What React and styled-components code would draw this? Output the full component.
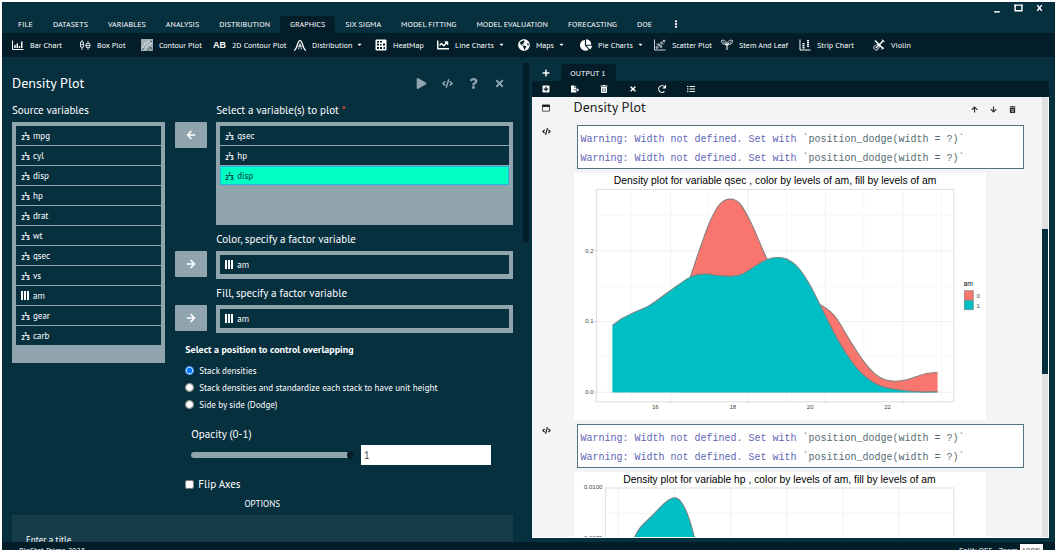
import React, {useState} from 'react';
import styled, {createGlobalStyle, css} from 'styled-components';
import {
	FaArrowDown,
	FaArrowLeft,
	FaArrowRight,
	FaArrowUp,
	FaCaretDown,
	FaChartLine,
	FaChartPie,
	FaCode,
	FaEllipsisV,
	FaFileExport,
	FaGlobeAmericas,
	FaListUl,
	FaPlay,
	FaPlus,
	FaPlusSquare,
	FaQuestion,
	FaRedo,
	FaRegWindowMaximize,
	FaTimes,
	FaTrashAlt,
} from 'react-icons/fa';

const menus = ['FILE', 'DATASETS', 'VARIABLES', 'ANALYSIS', 'DISTRIBUTION', 'GRAPHICS', 'SIX SIGMA', 'MODEL FITTING', 'MODEL EVALUATION', 'FORECASTING', 'DOE'];

const BarIcon = () => (
	<svg viewBox='0 0 24 24' fill='none' stroke='currentColor'>
		<path d='M1 3v18h22' strokeWidth='2' />
		<path d='M6 18v-6M10.500 18V9M15 18v-4M19.500 18V5' strokeWidth='3' />
	</svg>
);
const BoxIcon = () => (
	<svg viewBox='0 0 24 24' fill='none' stroke='currentColor' strokeWidth='1.600'>
		<path d='M6 2v4M6 16v6M3 6h6v10H3zM3 11h6M18 4v5M18 17v5M14.500 9h7v8h-7zM12 13h11' />
	</svg>
);
const ContourIcon = () => (
	<svg viewBox='0 0 24 24'>
		<rect x='0' y='0' width='24' height='24' fill='#a3b0b5' />
		<path d='M2 18c5-2 3-9 8-10s4-5 9-5M7 22c1-7 5-5 7-9s4-3 8-4' fill='none' stroke='#dfe5e7' strokeWidth='2' />
		<path d='M13 23l6-7 4 6M18 3l4 3M3 21l4-3' fill='none' stroke='#3c5059' strokeWidth='2' />
	</svg>
);
const BellIcon = () => (
	<svg viewBox='0 0 24 24' fill='none' stroke='currentColor' strokeWidth='2.500'>
		<path d='M0 22c7 0 6-19 12-19s5 19 12 19' />
		<path d='M9 21l3-12 3 12M7 14h10' strokeWidth='1.500' />
	</svg>
);
const HeatIcon = () => (
	<svg viewBox='0 0 24 24'>
		<rect x='1' y='1' width='22' height='22' rx='2' fill='currentColor' />
		<path d='M4 4h4v3H4zM10 4h4v3h-4zM4 9h4v4H4zM16 9h4v4h-4zM10 10h3v3h-3zM4 16h4v4H4zM10 16h4v4h-4zM17 16h3v4h-3z' fill='#031d29' />
	</svg>
);
const ScatterIcon = () => (
	<svg viewBox='0 0 24 24' fill='none' stroke='currentColor' strokeWidth='1.600'>
		<path d='M1 1v21h22' />
		<circle cx='6' cy='17' r='1.800' />
		<circle cx='10' cy='12' r='1.800' />
		<circle cx='14' cy='15' r='1.800' />
		<circle cx='15' cy='8' r='1.800' />
		<circle cx='20' cy='4' r='1.800' />
		<path d='M5 12l3-3M18 11l2-2' />
	</svg>
);
const LeafIcon = () => (
	<svg viewBox='0 0 24 24' fill='none' stroke='currentColor' strokeWidth='1.600'>
		<path d='M12 22v-8c0-3 2-4 4-6M12 14c0-3-2-4-5-6' strokeWidth='2' />
		<path d='M1 3c6-2 10 1 10 8C5 12 1 9 1 3zM23 3c-6-2-10 1-10 8 6 1 10-2 10-8z' />
		<path d='M4 5l4 4M20 5l-4 4' />
	</svg>
);
const StripIcon = () => (
	<svg viewBox='0 0 24 24' fill='none' stroke='currentColor'>
		<path d='M2 1v21h21' strokeWidth='2' />
		<path d='M9 8v11M18 2v14' strokeWidth='4' strokeDasharray='3 1' />
	</svg>
);
const ViolinIcon = () => (
	<svg viewBox='0 0 24 24' fill='none' stroke='currentColor' strokeWidth='2'>
		<path d='M2 15c2-3 4-1 5-3s3-2 5 0 2 4 0 5-1 4-4 5-8-3-6-7z' />
		<path d='M6 18L21 3M4 3l17 17' strokeWidth='3' />
		<path d='M18 1l5 5M17 21l4-4' />
	</svg>
);
const AbIcon = () => <AbText>AB</AbText>;

const tools = [
	{label: 'Bar Chart', Icon: BarIcon, width: 67},
	{label: 'Box Plot', Icon: BoxIcon, width: 62},
	{label: 'Contour Plot', Icon: ContourIcon, width: 72},
	{label: '2D Contour Plot', Icon: AbIcon, width: 81},
	{label: 'Distribution', Icon: BellIcon, width: 81, menu: true},
	{label: 'HeatMap', Icon: HeatIcon, width: 62},
	{label: 'Line Charts', Icon: FaChartLine, width: 81, menu: true},
	{label: 'Maps', Icon: FaGlobeAmericas, width: 62, menu: true},
	{label: 'Pie Charts', Icon: FaChartPie, width: 74, menu: true},
	{label: 'Scatter Plot', Icon: ScatterIcon, width: 67},
	{label: 'Stem And Leaf', Icon: LeafIcon, width: 78},
	{label: 'Strip Chart', Icon: StripIcon, width: 74},
	{label: 'Violin', Icon: ViolinIcon, width: 62},
];

const sourceVars = ['mpg', 'cyl', 'disp', 'hp', 'drat', 'wt', 'qsec', 'vs', 'am', 'gear', 'carb'];
const positions = ['Stack densities', 'Stack densities and standardize each stack to have unit height', 'Side by side (Dodge)'];

// smooth curve through a list of points
const curve = pts =>
	pts.reduce((d, p, i) => {
		if (i === 0) return `M${p[0]} ${p[1]}`;
		const a = pts[i - 2] || pts[i - 1];
		const b = pts[i - 1];
		const n = pts[i + 1] || p;
		return `${d}C${b[0] + (p[0] - a[0]) / 6} ${b[1] + (p[1] - a[1]) / 6} ${p[0] - (n[0] - b[0]) / 6} ${p[1] - (n[1] - b[1]) / 6} ${p[0]} ${p[1]}`;
	}, '');

const qsecZero = [[330, 400], [360, 322], [388, 240], [418, 158], [448, 104], [480, 87], [512, 104], [548, 169], [591, 267], [640, 350], [700, 385], [748, 403], [775, 420], [800, 446], [840, 512], [880, 573], [915, 612], [945, 629], [975, 633], [1010, 629], [1060, 612], [1102, 606]];
const qsecOne = [[127, 466], [155, 446], [190, 428], [240, 405], [300, 362], [350, 327], [378, 315], [408, 312], [450, 317], [490, 318], [520, 310], [560, 285], [591, 268], [622, 262], [650, 267], [682, 290], [715, 337], [748, 400], [790, 485], [830, 553], [870, 605], [910, 637], [950, 653], [1000, 661], [1050, 665], [1102, 665]];
const hpOne = [[150, 330], [170, 255], [191, 209], [211, 175], [247, 139], [287, 99], [313, 86], [333, 98], [354, 140], [374, 209], [400, 330]];

const QsecPlot = () => (
	<Plot viewBox='12 9 1236 741' role='img'>
		<text x='615' y='42' fontSize='31' textAnchor='middle'>Density plot for variable qsec , color by levels of am, fill by levels of am</text>
		<path d='M184 58v637M417 58v637M649 58v637M881 58v637M1114 58v637M79 136h1072M79 348h1072M79 560h1072' stroke='#f7f7f7' strokeWidth='3' />
		<path d='M301 58v637M533 58v637M766 58v637M998 58v637M79 242h1072M79 454h1072M79 666h1072' stroke='#f0f0f0' strokeWidth='3' />
		<path d='M301 695v5M533 695v5M766 695v5M998 695v5M74 242h5M74 454h5M74 666h5' stroke='#ccc' strokeWidth='3' />
		<path d={`${curve(qsecZero)}V666H330Z`} fill='#f8766d' />
		<path d={curve(qsecZero)} fill='none' stroke='#7f7f7f' strokeWidth='3' />
		<path d={`${curve(qsecOne)}V667H127Z`} fill='#00bfc4' />
		<path d={curve(qsecOne)} fill='none' stroke='#7f7f7f' strokeWidth='3' />
		<rect x='79' y='58' width='1072' height='637' fill='none' stroke='#dcdcdc' strokeWidth='3' />
		<g fontSize='18' fill='#444' textAnchor='middle'>
			<text x='256' y='716'>16</text>
			<text x='488' y='716'>18</text>
			<text x='720' y='716'>20</text>
			<text x='952' y='716'>22</text>
			<text x='58' y='248'>0.2</text>
			<text x='58' y='460'>0.1</text>
			<text x='58' y='672'>0.0</text>
			<text x='1224' y='383'>0</text>
			<text x='1224' y='413'>1</text>
		</g>
		<text x='1180' y='349' fontSize='20'>am</text>
		<rect x='1182' y='362' width='27' height='28' fill='#f8766d' stroke='#7f7f7f' strokeWidth='2' />
		<rect x='1182' y='391' width='27' height='28' fill='#00bfc4' stroke='#7f7f7f' strokeWidth='2' />
	</Plot>
);
const HpPlot = () => (
	<Plot viewBox='12 9 1236 741' role='img'>
		<text x='628' y='42' fontSize='31' textAnchor='middle'>Density plot for variable hp , color by levels of am, fill by levels of am</text>
		<path d='M145 57v640M313 57v640M482 57v640M650 57v640M819 57v640M986 57v640M106 133h1045M106 210h1045' stroke='#f3f3f3' strokeWidth='3' />
		<path d={`${curve(hpOne)}Z`} fill='#00bfc4' stroke='#7f7f7f' strokeWidth='3' />
		<rect x='106' y='57' width='1045' height='640' fill='none' stroke='#dcdcdc' strokeWidth='3' />
		<g fontSize='18' fill='#444' textAnchor='end'>
			<text x='97' y='60'>0.0100</text>
			<text x='97' y='213'>0.0075</text>
		</g>
	</Plot>
);

const Variable = ({name, selected}) => (
	<VarItem role='option' aria-selected={!!selected} $selected={selected}>
		{name === 'am' ? (
			<svg viewBox='0 0 10 10' fill='currentColor'>
				<path d='M0 0h2v9H0zM3 0h2v9H3zM6 0h2v9H6z' />
			</svg>
		) : (
			<svg viewBox='0 0 10 10' fill='currentColor' fontSize='7' fontWeight='700'>
				<text x='0' y='9'>2</text>
				<text x='3' y='5' fontSize='6'>1</text>
				<text x='5' y='9'>3</text>
			</svg>
		)}
		{name}
	</VarItem>
);

const VariableField = ({label, vars, selected, required, back, tall}) => (
	<Field>
		<FieldLabel>
			{label} {required && <Star>*</Star>}
		</FieldLabel>
		<MoveButton aria-label={back ? 'Remove' : 'Add'}>{back ? <FaArrowLeft /> : <FaArrowRight />}</MoveButton>
		<VarList role='listbox' aria-label={label} $tall={tall}>
			{vars.map(v => (
				<Variable key={v} name={v} selected={v === selected} />
			))}
		</VarList>
	</Field>
);

const Warning = () => (
	<WarningBox>
		{[0, 1].map(i => (
			<p key={i}>
				<span>Warning: Width not defined. Set with</span> `position_dodge(width = ?)`
			</p>
		))}
	</WarningBox>
);

const App = () => {
	const [position, setPosition] = useState(positions[0]);
	const [opacity, setOpacity] = useState('1');
	return (
		<Window>
			<GlobalStyle />
			<TitleBar>
				<button aria-label='Minimize'>
					<svg viewBox='0 0 8 8'><path d='M1 7h5' /></svg>
				</button>
				<button aria-label='Maximize'>
					<svg viewBox='0 0 8 8'><path d='M1 1h6v5H1zM0 1h8' /></svg>
				</button>
				<button aria-label='Close'>
					<svg viewBox='0 0 8 8'><path d='M2 1l4 5M6 1L2 6' /></svg>
				</button>
			</TitleBar>
			<MenuBar>
				{menus.map(m => (
					<MenuTab key={m} $active={m === 'GRAPHICS'}>{m}</MenuTab>
				))}
				<MenuTab aria-label='More'><FaEllipsisV /></MenuTab>
			</MenuBar>
			<ToolBar>
				{tools.map(({label, Icon, width, menu}) => (
					<Tool key={label} $width={width}>
						<Icon />
						{label}
						{menu && <Caret />}
					</Tool>
				))}
			</ToolBar>
			<Main>
				<DialogPane>
					<DialogBody>
						<DialogHeader>
							<DialogTitle>Density Plot</DialogTitle>
							<DialogAction aria-label='Run'><FaPlay /></DialogAction>
							<DialogAction aria-label='Code'><FaCode /></DialogAction>
							<DialogAction aria-label='Help'><FaQuestion /></DialogAction>
							<DialogAction aria-label='Close dialog'><FaTimes /></DialogAction>
						</DialogHeader>
						<Columns>
							<div>
								<FieldLabel>Source variables</FieldLabel>
								<SourceList role='listbox' aria-label='Source variables'>
									{sourceVars.map(v => (
										<Variable key={v} name={v} />
									))}
								</SourceList>
							</div>
							<div>
								<VariableField label='Select a variable(s) to plot' vars={['qsec', 'hp', 'disp']} selected='disp' required back tall />
								<VariableField label='Color, specify a factor variable' vars={['am']} />
								<VariableField label='Fill, specify a factor variable' vars={['am']} />
								<Controls>
									<RadioGroup>
										<legend>Select a position to control overlapping</legend>
										{positions.map(p => (
											<RadioLabel key={p}>
												<input type='radio' name='position' checked={position === p} onChange={() => setPosition(p)} />
												{p}
											</RadioLabel>
										))}
									</RadioGroup>
									<Opacity>
										<FieldLabel as='label' htmlFor='opacity'>Opacity (0-1)</FieldLabel>
										<OpacityRow>
											<Slider id='opacity' type='range' min='0' max='1' step='0.1' value={opacity} onChange={e => setOpacity(e.target.value)} />
											<NumberInput aria-label='Opacity value' value={opacity} onChange={e => setOpacity(e.target.value)} />
										</OpacityRow>
									</Opacity>
									<CheckLabel>
										<input type='checkbox' />
										Flip Axes
									</CheckLabel>
								</Controls>
							</div>
						</Columns>
						<OptionsTitle>OPTIONS</OptionsTitle>
						<OptionsPanel>Enter a title</OptionsPanel>
					</DialogBody>
					<DialogScroll />
				</DialogPane>
				<OutputPane>
					<OutputTabs>
						<IconButton aria-label='New output'><FaPlus /></IconButton>
						<OutputTab>OUTPUT 1</OutputTab>
					</OutputTabs>
					<OutputTools>
						<IconButton aria-label='Add'><FaPlusSquare /></IconButton>
						<IconButton aria-label='Export'><FaFileExport /></IconButton>
						<IconButton aria-label='Delete'><FaTrashAlt /></IconButton>
						<IconButton aria-label='Clear'><FaTimes /></IconButton>
						<IconButton aria-label='Refresh'><FaRedo /></IconButton>
						<IconButton aria-label='List'><FaListUl /></IconButton>
					</OutputTools>
					<OutputBody>
						<Results>
							<ResultRow>
								<Gutter $header><FaRegWindowMaximize /></Gutter>
								<ResultHeader>
									<ResultTitle>Density Plot</ResultTitle>
									<button aria-label='Move up'><FaArrowUp /></button>
									<button aria-label='Move down'><FaArrowDown /></button>
									<button aria-label='Delete result'><FaTrashAlt /></button>
								</ResultHeader>
							</ResultRow>
							<ResultRow>
								<Gutter><FaCode /></Gutter>
								<div>
									<Warning />
									<QsecPlot />
								</div>
							</ResultRow>
							<ResultRow>
								<Gutter><FaCode /></Gutter>
								<div>
									<Warning />
									<HpPlot />
								</div>
							</ResultRow>
						</Results>
						<OutputScroll><div /></OutputScroll>
					</OutputBody>
				</OutputPane>
			</Main>
			<StatusBar>
				<span>BioStat Prime 2023</span>
				<Zoom>
					Split: OFF &nbsp; Zoom <b>100%</b>
				</Zoom>
			</StatusBar>
		</Window>
	);
};

const GlobalStyle = createGlobalStyle`
	* {
		box-sizing: border-box;
	}
	body {
		margin: 0;
		background: #fff;
		font-family: 'PT Sans', 'Noto Sans', sans-serif;
		font-size: 9px;
		color: #fff;
	}
	button {
		background: none;
		border: none;
		padding: 0;
		font: inherit;
		color: inherit;
		display: flex;
		align-items: center;
		justify-content: center;
	}
	h1, h2, p, ul {
		margin: 0;
		padding: 0;
	}
`;
const Window = styled.div`
	height: 100vh;
	border: 2px solid #fff;
	background: #07303f;
	display: flex;
	flex-direction: column;
	overflow: hidden;
`;
const TitleBar = styled.header`
	display: flex;
	justify-content: flex-end;
	gap: 12px;
	height: 14px;
	padding: 0 11px 2px;
	svg {
		width: 9px;
		height: 9px;
		fill: none;
		stroke: #fff;
		stroke-width: 1.3;
	}
`;
const barFont = css`
	font-family: 'PT Sans', Lato, sans-serif;
	font-size: 8px;
`;
const MenuBar = styled.nav`
	display: flex;
	height: 17px;
	padding-left: 6px;
	${barFont}
`;
const MenuTab = styled.button`
	padding: 0 10px 2px;
	white-space: nowrap;
	border-radius: 2px 2px 0 0;
	background: ${({$active}) => ($active ? '#031d29' : 'none')};
`;
const ToolBar = styled.div`
	display: flex;
	height: 24px;
	padding: 0 0 1px 10px;
	background: #031d29;
	${barFont}
`;
const Tool = styled.button`
	flex: 0 0 ${({$width}) => $width}px;
	justify-content: flex-start;
	gap: 6px;
	white-space: nowrap;
	svg {
		width: 12px;
		height: 12px;
		flex: none;
	}
`;
const AbText = styled.b`
	font: bold 9px 'Liberation Sans', sans-serif;
`;
const Caret = styled(FaCaretDown)`
	&& {
		width: 7px;
		height: 7px;
		margin-left: -2px;
	}
`;
const Main = styled.main`
	flex: 1;
	min-height: 0;
	display: grid;
	grid-template-columns: 1fr 1fr;
`;
const DialogPane = styled.section`
	display: flex;
	min-height: 0;
	overflow: hidden;
`;
const DialogBody = styled.div`
	flex: 1;
	padding: 13px 10px 0;
`;
const DialogScroll = styled.div`
	width: 6px;
	margin-top: 6px;
	height: 37%;
	background: #031d29;
`;
const DialogHeader = styled.div`
	display: flex;
	align-items: center;
	height: 26px;
	margin-bottom: 6px;
	padding-right: 7px;
	gap: 13px;
`;
const DialogTitle = styled.h1`
	flex: 1;
	font-size: 14px;
	font-weight: 400;
`;
const DialogAction = styled.button`
	width: 13px;
	font-size: 11px;
	color: #90a4ae;
	svg {
		flex: none;
	}
`;
const Columns = styled.div`
	display: grid;
	grid-template-columns: 5fr 11fr;
	gap: 10px;
`;
const FieldLabel = styled.div`
	display: block;
	height: 16px;
	line-height: 16px;
	margin-bottom: 4px;
	font-size: 11px;
	white-space: nowrap;
`;
const Star = styled.span`
	color: #f4511e;
`;
const Field = styled.div`
	display: grid;
	grid-template-columns: 32px 1fr;
	column-gap: 9px;
	margin-bottom: 6px;
	${FieldLabel} {
		grid-column: 2;
	}
`;
const MoveButton = styled.button`
	height: 26px;
	border-radius: 1px;
	background: #90a4ae;
	font-size: 10px;
`;
const VarList = styled.ul`
	list-style: none;
	padding: 4px;
	background: #90a4ae;
	display: flex;
	flex-direction: column;
	gap: 1px;
	min-height: ${({$tall}) => ($tall ? '103px' : '28px')};
`;
const SourceList = styled(VarList)`
	min-height: 241px;
`;
const VarItem = styled.li`
	display: flex;
	align-items: center;
	gap: 2px;
	height: 19px;
	padding-left: 5px;
	background: #07303f;
	font-size: 9px;
	svg {
		width: 10px;
		height: 10px;
		overflow: visible;
	}
	${({$selected}) =>
		$selected &&
		css`
			background: #00ffc3;
			color: #07303f;
			outline: 1px solid #1fb6e0;
			outline-offset: -1px;
		`}
`;
const Controls = styled.div`
	padding: 3px 22px 0 10px;
`;
const RadioGroup = styled.fieldset`
	border: none;
	margin: 0;
	padding: 0;
	legend {
		padding: 0;
		margin-bottom: 4px;
		font-size: 10px;
		line-height: 16px;
		font-weight: 700;
		white-space: nowrap;
	}
`;
const RadioLabel = styled.label`
	display: flex;
	align-items: center;
	height: 17px;
	gap: 5px;
	font-size: 9px;
	white-space: nowrap;
	input {
		width: 9px;
		height: 9px;
		margin: 0;
	}
`;
const Opacity = styled.div`
	margin: 13px 0 11px;
	padding-left: 6px;
	${FieldLabel} {
		margin-bottom: 3px;
	}
`;
const OpacityRow = styled.div`
	display: grid;
	grid-template-columns: 5fr 4fr;
	gap: 7px;
	align-items: center;
`;
const Slider = styled.input`
	appearance: none;
	width: 100%;
	height: 6px;
	margin: 0;
	border-radius: 3px;
	background: #90a4ae;
	&::-webkit-slider-thumb {
		appearance: none;
		width: 7px;
		height: 8px;
		border-radius: 50%;
		background: #031d29;
	}
`;
const NumberInput = styled.input`
	width: 100%;
	height: 20px;
	border: none;
	padding: 0 3px;
	background: #fff;
	color: #444;
	font: inherit;
	font-size: 11px;
`;
const CheckLabel = styled.label`
	display: flex;
	align-items: center;
	height: 16px;
	gap: 4px;
	font-size: 11px;
	input {
		width: 9px;
		height: 9px;
		margin: 0;
	}
`;
const OptionsTitle = styled.div`
	margin: 4px 0 3px;
	line-height: 16px;
	font-size: 9px;
	text-align: center;
`;
const OptionsPanel = styled.div`
	height: 60px;
	padding: 18px 14px;
	background: #163c4a;
	line-height: 14px;
	font-size: 9px;
`;
const OutputPane = styled.section`
	display: flex;
	flex-direction: column;
	min-height: 0;
	padding: 7px 6px 4px 3px;
`;
const IconButton = styled.button`
	width: 29px;
	font-size: 8px;
`;
const OutputTabs = styled.div`
	display: flex;
	height: 17px;
`;
const OutputTab = styled.button`
	width: 55px;
	${barFont}
	border-radius: 3px 3px 0 0;
	background: #031d29;
`;
const OutputTools = styled.div`
	display: flex;
	height: 16px;
	border-radius: 0 2px 0 0;
	background: #031d29;
`;
const OutputBody = styled.div`
	flex: 1;
	min-height: 0;
	display: flex;
	overflow: hidden;
	background: #f3f4f6;
	color: #222;
	border: solid #fff;
	border-width: 0 1px 1px 0;
`;
const Results = styled.div`
	flex: 1;
	overflow: hidden;
`;
const ResultRow = styled.div`
	display: grid;
	grid-template-columns: 42px 1fr;
	margin-bottom: 4px;
`;
const Gutter = styled.div`
	padding: ${({$header}) => ($header ? '7px' : '2px')} 0 0 10px;
	font-size: ${({$header}) => ($header ? '8px' : '9px')};
`;
const ResultHeader = styled.div`
	display: flex;
	align-items: center;
	height: 24px;
	padding-right: 26px;
	gap: 12px;
	font-size: 7px;
`;
const ResultTitle = styled.h2`
	flex: 1;
	align-self: flex-start;
	font-size: 14px;
	line-height: 20px;
	font-weight: 500;
`;
const WarningBox = styled.div`
	height: 44px;
	margin: 0 18px 4px 3px;
	padding: 4px 3px 0;
	background: #fff;
	border: 1px solid #4f7480;
	color: #556b73;
	font: 10px/19px 'Liberation Mono', monospace;
	white-space: pre;
	span {
		color: #6065b5;
	}
`;
const Plot = styled.svg`
	display: block;
	width: 88%;
	background: #fff;
	font-family: 'Liberation Sans', sans-serif;
`;
const OutputScroll = styled.div`
	width: 6px;
	background: #e0e0e0;
	display: grid;
	grid-template-rows: 30fr 33fr 37fr;
	div {
		grid-row: 2;
		background: #07303f;
	}
`;
const StatusBar = styled.footer`
	display: flex;
	justify-content: space-between;
	height: 8px;
	padding: 2px 12px 0 17px;
	overflow: hidden;
	background: #031d29;
	font-size: 8px;
	line-height: 12px;
`;
const Zoom = styled.div`
	b {
		display: inline-block;
		padding: 0 2px;
		background: #fff;
		color: #333;
		font-weight: 400;
	}
`;
export default App;
